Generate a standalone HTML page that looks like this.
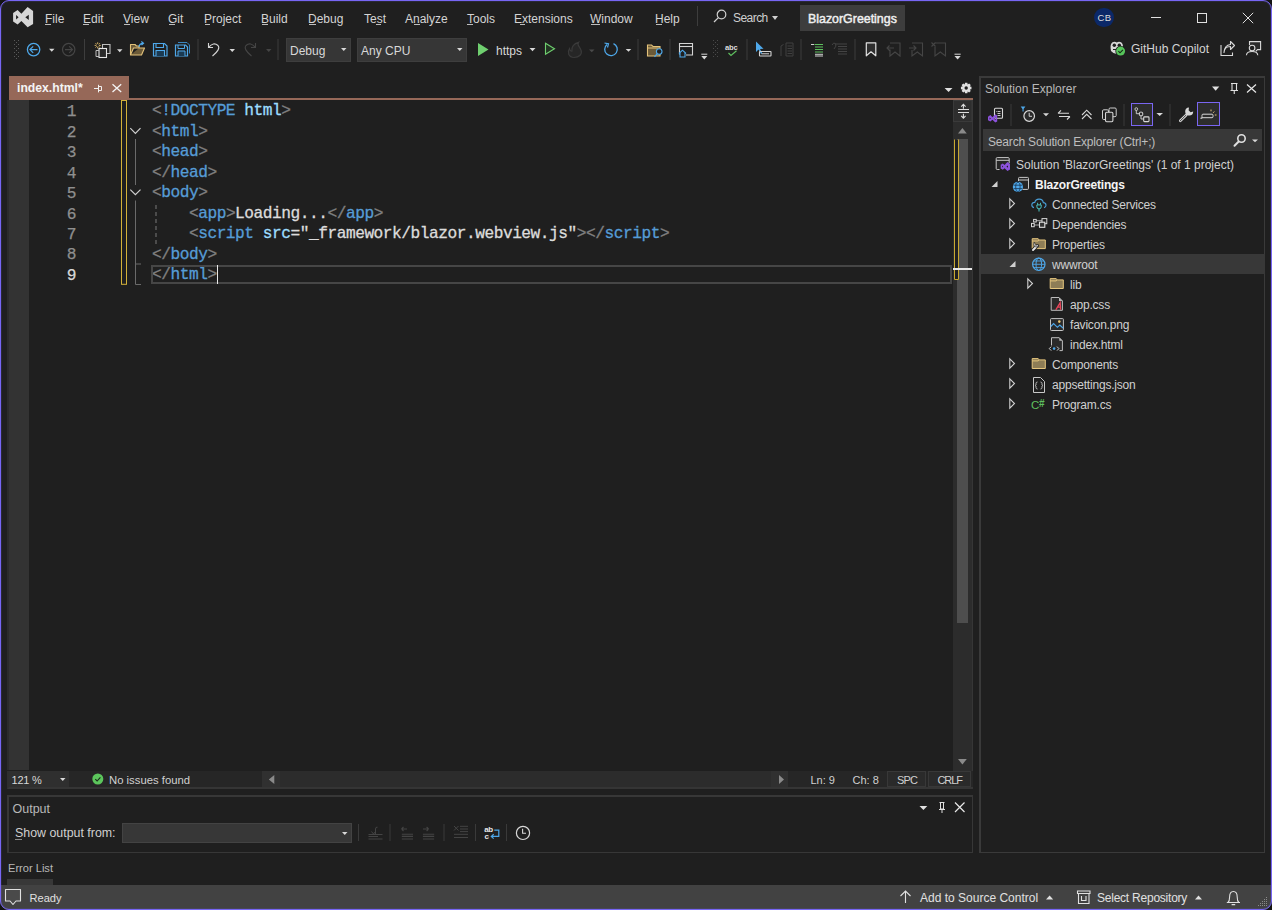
<!DOCTYPE html>
<html><head><meta charset="utf-8">
<style>
*{margin:0;padding:0;box-sizing:border-box}
html,body{width:1272px;height:910px;overflow:hidden;background:#141414}
body{font-family:"Liberation Sans",sans-serif;font-size:12px;color:#d0d0d0;position:relative}
.a{position:absolute}
.t{position:absolute;white-space:pre;line-height:14px}
#win{position:absolute;left:0;top:0;width:1272px;height:910px;background:#1f1f1f;overflow:hidden}
#frame{position:absolute;left:0;top:0;width:1272px;height:910px;border:1px solid #7766f4;border-radius:9px;box-shadow:0 0 0 30px #141414, inset 0 0 0 1px rgba(119,102,244,0.12);z-index:50}
svg.ov{position:absolute;left:0;top:0;z-index:5}
.menu .t{top:12px;color:#d4d4d4}
.ul{position:absolute;height:1px;top:24px;background:#bdbdbd}
.u{text-decoration:underline;text-underline-offset:2px}
.code{font-family:"Liberation Mono",monospace;font-size:16.2px;line-height:20.45px;letter-spacing:-0.48px;-webkit-text-stroke:0.3px}
.ln{position:absolute;left:30px;width:46px;text-align:right;color:#8f8f8f;font-family:"Liberation Mono",monospace;font-size:16.2px;letter-spacing:-0.48px;-webkit-text-stroke:0.25px}
.tag{color:#569cd6}
.br{color:#808080}
.att{color:#9cdcfe}
.txt{color:#dcdcdc}
.sep{position:absolute;width:1px;background:#3d3d3d}
</style></head><body>
<div id="win">
<!-- title/menu bar -->
<div class="menu">
  <svg class="ov" width="40" height="34" viewBox="0 0 40 34"><path d="M13.1 12.9 L17.6 10.1 L21.4 13.7 L27.6 7 L33.1 10.9 V24 L27.6 27.2 L21.4 21.1 L17.6 24.6 L13.1 21.5 Z M16.1 15 V19.5 L18.6 17.2 Z M25.3 17.2 L28.8 14.7 V20 Z" fill="#d6d6d6" fill-rule="evenodd"/></svg>
  <div class="t" style="left:45px">File</div>
  <div class="t" style="left:83px">Edit</div>
  <div class="t" style="left:123px">View</div>
  <div class="t" style="left:168px">Git</div>
  <div class="t" style="left:204px">Project</div>
  <div class="t" style="left:261px">Build</div>
  <div class="t" style="left:308px">Debug</div>
  <div class="t" style="left:364px">Test</div>
  <div class="t" style="left:405px">Analyze</div>
  <div class="t" style="left:467px">Tools</div>
  <div class="t" style="left:514px">Extensions</div>
  <div class="t" style="left:590px">Window</div>
  <div class="t" style="left:655px">Help</div>
<div class="ul" style="left:45px;width:6px"></div><div class="ul" style="left:83px;width:6px"></div><div class="ul" style="left:124px;width:6px"></div><div class="ul" style="left:169px;width:6px"></div><div class="ul" style="left:205px;width:5px"></div><div class="ul" style="left:262px;width:6px"></div><div class="ul" style="left:309px;width:7px"></div><div class="ul" style="left:376px;width:5px"></div><div class="ul" style="left:414px;width:6px"></div><div class="ul" style="left:467px;width:6px"></div><div class="ul" style="left:520px;width:5px"></div><div class="ul" style="left:591px;width:9px"></div><div class="ul" style="left:656px;width:6px"></div>
  <div class="sep" style="left:697px;top:6px;height:20px"></div>
  <svg class="a" style="left:713px;top:9px" width="14" height="14" viewBox="0 0 14 14"><circle cx="8.5" cy="5.5" r="4.3" fill="none" stroke="#d0d0d0" stroke-width="1.2"/><path d="M5.4 8.6 L1 13" stroke="#d0d0d0" stroke-width="1.3"/></svg>
  <div class="t" style="left:733px;top:10.5px;letter-spacing:-0.55px;color:#d0d0d0">Search</div>
  <div class="a" style="left:772px;top:16px;width:0;height:0;border-left:3.5px solid transparent;border-right:3.5px solid transparent;border-top:4px solid #d0d0d0"></div>
  <div class="a" style="left:800px;top:5px;width:105px;height:26px;background:#3d3d3d"></div>
  <div class="t" style="left:808px;top:11.5px;color:#f0f0f0;font-size:12.4px;-webkit-text-stroke:0.45px">BlazorGreetings</div>
  <div class="a" style="left:1094px;top:7.7px;width:19.8px;height:19.8px;border-radius:50%;background:#0b2868"></div>
  <div class="t" style="left:1097.5px;top:10.5px;font-size:9.5px;color:#dcdcdc;letter-spacing:0.3px">CB</div>
  <div class="a" style="left:1151px;top:17px;width:10px;height:1px;background:#e0e0e0"></div>
  <div class="a" style="left:1197px;top:13px;width:10px;height:10px;border:1px solid #e0e0e0"></div>
  <svg class="a" style="left:1242px;top:12px" width="13" height="13" viewBox="0 0 13 13"><path d="M0.8 0.8 L11.2 11.2 M11.2 0.8 L0.8 11.2" stroke="#e0e0e0" stroke-width="1"/></svg>
</div>

<!-- toolbar -->
<svg class="ov" width="1272" height="910" viewBox="0 0 1272 910">
 <g fill="#5a5a5a">
  <rect x="14" y="40" width="1" height="1"/><rect x="18" y="40" width="1" height="1"/>
  <rect x="16" y="42" width="1" height="1"/>
  <rect x="14" y="44" width="1" height="1"/><rect x="18" y="44" width="1" height="1"/>
  <rect x="16" y="46" width="1" height="1"/>
  <rect x="14" y="48" width="1" height="1"/><rect x="18" y="48" width="1" height="1"/>
  <rect x="16" y="50" width="1" height="1"/>
  <rect x="14" y="52" width="1" height="1"/><rect x="18" y="52" width="1" height="1"/>
  <rect x="16" y="54" width="1" height="1"/>
  <rect x="14" y="56" width="1" height="1"/><rect x="18" y="56" width="1" height="1"/>
  <rect x="16" y="58" width="1" height="1"/>
 </g>
 <!-- back -->
 <circle cx="33.6" cy="49.6" r="6.2" fill="none" stroke="#4ea8ea" stroke-width="1.3"/>
 <path d="M30 49.6 H37.5 M33.2 46.3 L29.9 49.6 L33.2 52.9" fill="none" stroke="#4ea8ea" stroke-width="1.2"/>
 <path d="M49 48.8 H54.5 L51.75 51.8 Z" fill="#d8d8d8"/>
 <!-- forward disabled -->
 <circle cx="68.7" cy="49.6" r="6.2" fill="none" stroke="#454545" stroke-width="1.2"/>
 <path d="M65 49.6 H72.5 M69.2 46.3 L72.5 49.6 L69.2 52.9" fill="none" stroke="#454545" stroke-width="1.1"/>
 <rect x="84" y="39" width="1" height="21" fill="#3d3d3d"/>
 <!-- new project -->
 <path d="M102.5 48 V44.5 H110 V53.5 H107" fill="none" stroke="#bdbdbd" stroke-width="1.1"/>
 <rect x="99" y="48.5" width="7.5" height="9" fill="#2a2a2a" stroke="#e6e6e6" stroke-width="1.1"/>
 <path d="M99 50.5 H96 V56.5 H99" fill="none" stroke="#bdbdbd" stroke-width="1"/>
 <path d="M97.7 42.3 V48.5 M94.6 45.4 H100.8 M95.5 43.2 L99.9 47.6 M99.9 43.2 L95.5 47.6" stroke="#e6c06a" stroke-width="0.9"/>
 <circle cx="97.7" cy="45.4" r="1.3" fill="#1f1f1f"/>
 <path d="M117 49.2 H122.5 L119.75 52.2 Z" fill="#d8d8d8"/>
 <!-- open -->
 <path d="M130.5 55 V44.5 H135 L136.5 46 H139 V48 H133.5 L130.5 55 H141.5 L144.5 48 H139" fill="#6b5a38" stroke="#e3c27a" stroke-width="1.1" stroke-linejoin="round"/>
 <path d="M139 47 Q139.5 43.5 143 43.2 M141.3 41.5 L143.5 43.2 L141.5 45" fill="none" stroke="#4ea8ea" stroke-width="1.2"/>
 <!-- save -->
 <path d="M153.5 43.5 H164.5 L167 46 V56 H153.5 Z" fill="none" stroke="#4ea8ea" stroke-width="1.2"/>
 <path d="M156 43.5 V47.5 H163.5 V43.5" fill="none" stroke="#4ea8ea" stroke-width="1.1"/>
 <path d="M156 56 V50.5 H164.5 V56" fill="#1b3a52" stroke="#4ea8ea" stroke-width="1.1"/>
 <!-- save all -->
 <path d="M178 42.5 H187 L189.5 45 V53.5" fill="none" stroke="#3b86bf" stroke-width="1"/>
 <path d="M175.5 45 H185.5 L187.5 47 V56 H175.5 Z" fill="none" stroke="#4ea8ea" stroke-width="1.2"/>
 <path d="M178 45 V48.5 H184.5 V45" fill="none" stroke="#4ea8ea" stroke-width="1"/>
 <path d="M178 56 V51 H185 V56" fill="#1b3a52" stroke="#4ea8ea" stroke-width="1"/>
 <rect x="197.5" y="39" width="1" height="21" fill="#3d3d3d"/>
 <!-- undo -->
 <path d="M208.5 43 L208.5 47.5 L213 47.5 M208.6 47.3 Q213.5 41.5 218 45.5 Q221 49 212.5 56" fill="none" stroke="#d4d4d4" stroke-width="1.1"/>
 <path d="M229.5 49 H235 L232.25 52 Z" fill="#d8d8d8"/>
 <!-- redo disabled -->
 <path d="M255.5 43 L255.5 47.5 L251 47.5 M255.4 47.3 Q250.5 41.5 246 45.5 Q243 49 251.5 56" fill="none" stroke="#454545" stroke-width="1.1"/>
 <path d="M266 49 H271.5 L268.75 52 Z" fill="#454545"/>
 <rect x="277.5" y="39" width="1" height="21" fill="#3d3d3d"/>
 <!-- play -->
 <path d="M478 43 L488.5 49.5 L478 56 Z" fill="#6fcf6f"/>
 <path d="M529.5 48 H535.5 L532.5 51.2 Z" fill="#d8d8d8"/>
 <path d="M545.5 43.3 L554.5 48.8 L545.5 54.3 Z" fill="#223322" stroke="#6fcf6f" stroke-width="1.1"/>
 <!-- flame -->
 <path d="M574 57.5 C568.5 57.5 567 52 569.5 48.5 C570 51 571.5 51.5 572 51 C571 47 574 43.5 578.5 42.3 C576.5 45 580 47 581 50 C582.5 54 579.5 57.5 574 57.5 Z" fill="#262626" stroke="#3a3a3a" stroke-width="1.2"/>
 <path d="M589 49.5 H594.5 L591.75 52.2 Z" fill="#4a4a4a"/>
 <!-- refresh -->
 <path d="M607 44.5 A6.3 6.3 0 1 0 613.5 43.6" fill="none" stroke="#4ea8ea" stroke-width="1.3"/>
 <path d="M604.5 43 L608.5 43.8 L607.5 47.5" fill="none" stroke="#4ea8ea" stroke-width="1.2"/>
 <path d="M625.7 49 H631.3 L628.5 51.8 Z" fill="#d8d8d8"/>
 <rect x="637.5" y="39" width="1" height="21" fill="#3d3d3d"/>
 <!-- folder search -->
 <path d="M647.5 45 H651.5 L653 46.5 H660 V56 H647.5 Z" fill="#6b5a38" stroke="#e3c27a" stroke-width="1.1"/>
 <path d="M647.5 48 H660" stroke="#e3c27a" stroke-width="1"/>
 <circle cx="659.2" cy="51.5" r="2.8" fill="#1f1f1f" stroke="#4ea8ea" stroke-width="1.1"/>
 <path d="M657.2 53.6 L654.5 56.8" stroke="#4ea8ea" stroke-width="1.3"/>
 <rect x="669.5" y="39" width="1" height="21" fill="#3d3d3d"/>
 <!-- window home -->
 <path d="M679.5 54.5 V43.5 H692.5 V55 H686" fill="none" stroke="#d4d4d4" stroke-width="1.1"/>
 <path d="M679.5 46.5 H692.5" stroke="#d4d4d4" stroke-width="1.1"/>
 <path d="M679 53.5 L682.5 50.2 L686 53.5 M680 53 V57 H685 V53" fill="#1f1f1f" stroke="#4ea8ea" stroke-width="1.1"/>
 <path d="M701.3 54.2 H707.3" stroke="#d8d8d8" stroke-width="1"/><path d="M701.3 56 H707.3 L704.3 59.6 Z" fill="#d8d8d8"/>
 <g fill="#4a4a4a">
  <rect x="713" y="40" width="1" height="1"/><rect x="717" y="40" width="1" height="1"/><rect x="715" y="42" width="1" height="1"/>
  <rect x="713" y="44" width="1" height="1"/><rect x="717" y="44" width="1" height="1"/><rect x="715" y="46" width="1" height="1"/>
  <rect x="713" y="48" width="1" height="1"/><rect x="717" y="48" width="1" height="1"/><rect x="715" y="50" width="1" height="1"/>
  <rect x="713" y="52" width="1" height="1"/><rect x="717" y="52" width="1" height="1"/><rect x="715" y="54" width="1" height="1"/>
  <rect x="713" y="56" width="1" height="1"/><rect x="717" y="56" width="1" height="1"/>
 </g>
 <text x="725" y="50" font-family="Liberation Sans" font-size="7.6" font-weight="bold" fill="#dcdcdc" letter-spacing="-0.2">abc</text>
 <path d="M728.5 53 L731 55.5 L736.5 50.8" fill="none" stroke="#5fc05f" stroke-width="1.2"/>
 <rect x="746.5" y="39" width="1" height="21" fill="#3d3d3d"/>
 <!-- select cursor -->
 <path d="M756 41.5 L756 52 L758.5 49.5 L761 54 L762.3 53.3 L760 49 L763.5 48.8 Z" fill="#4ea8ea"/>
 <rect x="759.5" y="51.5" width="11.5" height="4.5" rx="0.5" fill="none" stroke="#d4d4d4" stroke-width="1.1"/>
 <path d="M761.5 53.8 H769" stroke="#d4d4d4" stroke-width="1"/>
 <!-- disabled -->
 <path d="M781 56 V46 L783.5 44.5 M786 43 H793 V56 H786 Z M787.5 46 H792 M787.5 48.5 H792 M787.5 51 H792 M787.5 53.5 H792" fill="none" stroke="#404040" stroke-width="1"/>
 <rect x="800.5" y="39" width="1" height="21" fill="#3d3d3d"/>
 <!-- comment -->
 <path d="M811 44.5 H814 M814.5 44.5 H823 M815 47 H823 M815 49.5 H823 M815 52 H823" stroke="#5fbf5f" stroke-width="1.2"/>
 <path d="M811 44.5 H814" stroke="#d0d0d0" stroke-width="1"/>
 <path d="M815 54.3 H823 M815 56 H823" stroke="#d0d0d0" stroke-width="1"/>
 <!-- uncomment -->
 <path d="M836 44 H847 M838 46.5 H847 M838 49 H847 M838 51.5 H847 M838 54 H847 M832 45 Q833.5 42 835.5 43.5 Q837 46 834 49" fill="none" stroke="#444" stroke-width="1"/>
 <rect x="854.5" y="39" width="1" height="21" fill="#3d3d3d"/>
 <!-- bookmarks -->
 <path d="M866.3 42.8 H875.8 V55.8 L871 51.8 L866.3 55.8 Z" fill="#2e2e2e" stroke="#e0e0e0" stroke-width="1.2" stroke-linejoin="round"/>
 <path d="M890 43 H900 V56 L895 52 L890 56 V49.5 M887 48 H894 M889.5 45.5 L887 48 L889.5 50.5" fill="none" stroke="#454545" stroke-width="1.1"/>
 <path d="M912 43 H922.5 V56 L917.3 52 L912 56 V50 M909 48 H916 M913.5 45.5 L916 48 L913.5 50.5" fill="none" stroke="#454545" stroke-width="1.1"/>
 <path d="M935 43 H945.5 V56 L940.3 52 L935 56 V47 M931.5 42.5 L935.5 46.5 M935.5 42.5 L931.5 46.5" fill="none" stroke="#454545" stroke-width="1.1"/>
 <path d="M954.5 54.2 H960.7" stroke="#d8d8d8" stroke-width="1"/><path d="M954.5 56 H960.7 L957.6 59.6 Z" fill="#d8d8d8"/>
 <!-- copilot -->
 <path d="M1110.6 48 Q1110.3 43.8 1112.5 42.3 Q1114.8 41 1116.8 42.6 Q1118.8 41 1121.1 42.3 Q1123.3 43.8 1123 48 L1122.6 51 Q1120 54 1116.8 54 Q1113.6 54 1111 51 Z" fill="#d8d8d8"/>
 <circle cx="1114.3" cy="45.2" r="1.7" fill="#1f1f1f"/>
 <circle cx="1119.3" cy="45.2" r="1.7" fill="#1f1f1f"/>
 <path d="M1113 49.5 H1120.6" stroke="#1f1f1f" stroke-width="1"/>
 <circle cx="1120.6" cy="51.1" r="5.3" fill="#1f1f1f"/>
 <circle cx="1120.6" cy="51.1" r="4.5" fill="#56c45a"/>
 <path d="M1118.4 51.2 L1120 52.8 L1122.9 49.8" fill="none" stroke="#142814" stroke-width="1.1"/>
 <!-- share -->
 <path d="M1221 45 V55.5 H1232.5 V52.5" fill="none" stroke="#d8d8d8" stroke-width="1.1"/>
 <path d="M1224 52.5 Q1224.5 46.5 1230.5 46.5 V49.5 L1234.5 45.5 L1230.5 41.5 V44.5 Q1224.5 45 1224 52.5 Z" fill="none" stroke="#d8d8d8" stroke-width="1.1" stroke-linejoin="round"/>
 <!-- feedback -->
 <path d="M1249.5 45 V41.6 H1260.6 V49.6 H1257.5 L1255.8 51.3" fill="#2a2a2a" stroke="#d8d8d8" stroke-width="1.1"/>
 <circle cx="1252.1" cy="48" r="2.8" fill="#1f1f1f" stroke="#d8d8d8" stroke-width="1.1"/>
 <path d="M1246.4 55.2 Q1246.8 51.5 1252.1 51.5 Q1257.4 51.5 1257.8 55.2" fill="none" stroke="#d8d8d8" stroke-width="1.1"/>
</svg>
<div class="a" style="left:286px;top:38px;width:65px;height:24px;background:#363636;border:1px solid #3e3e3e"></div>
<div class="t" style="left:290px;top:44px;color:#d8d8d8">Debug</div>
<svg class="a" style="left:341px;top:48px;z-index:6" width="6" height="4"><path d="M0 0 H5.5 L2.75 3 Z" fill="#d8d8d8"/></svg>
<div class="a" style="left:357px;top:38px;width:110px;height:24px;background:#363636;border:1px solid #3e3e3e"></div>
<div class="t" style="left:361px;top:44px;color:#d8d8d8">Any CPU</div>
<svg class="a" style="left:457px;top:48px;z-index:6" width="6" height="4"><path d="M0 0 H5.5 L2.75 3 Z" fill="#d8d8d8"/></svg>
<div class="t" style="left:496px;top:43.5px;color:#d8d8d8">https</div>
<div class="t" style="left:1131px;top:42px;color:#d4d4d4">GitHub Copilot</div>


<!-- tab -->
<div class="a" style="left:9px;top:76px;width:120px;height:24px;background:#966858"></div>
<div class="t" style="left:17px;top:81px;font-weight:bold;color:#f4f4f4;font-size:12.2px">index.html*</div>
<div class="a" style="left:9px;top:98px;width:964px;height:2px;background:#966858"></div>

<!-- solution explorer -->
<div class="a" style="left:979px;top:76px;width:286px;height:777px;border:1px solid #3a3a3a;border-width:2px 1px 1px 2px;background:#1f1f1f"></div>
<div class="t" style="left:985px;top:82px;color:#b8b8b8">Solution Explorer</div>
<div class="a" style="left:983px;top:129px;width:279px;height:22px;background:#383838"></div>
<div class="t" style="left:988px;top:134.5px;color:#bebebe;letter-spacing:-0.18px">Search Solution Explorer (Ctrl+;)</div>
<div class="a" style="left:981px;top:254px;width:284px;height:20px;background:#383838"></div>
<div class="a" style="left:1131px;top:103px;width:22px;height:23px;background:#2d2d2d;border:1px solid #7a66f2"></div>
<div class="a" style="left:1197px;top:102px;width:23px;height:24px;background:#2d2d2d;border:1px solid #7a66f2"></div>
<div class="t" style="left:1016px;top:158px;color:#d0d0d0">Solution 'BlazorGreetings' (1 of 1 project)</div>
<div class="t" style="left:1035px;top:178px;color:#f4f4f4;font-weight:bold;letter-spacing:-0.2px">BlazorGreetings</div>
<div class="t" style="left:1052px;top:198px;color:#d0d0d0;letter-spacing:-0.2px">Connected Services</div>
<div class="t" style="left:1052px;top:218px;color:#d0d0d0;letter-spacing:-0.2px">Dependencies</div>
<div class="t" style="left:1052px;top:238px;color:#d0d0d0;letter-spacing:-0.2px">Properties</div>
<div class="t" style="left:1052px;top:258px;color:#d0d0d0;letter-spacing:-0.2px">wwwroot</div>
<div class="t" style="left:1070px;top:278px;color:#d0d0d0;letter-spacing:-0.2px">lib</div>
<div class="t" style="left:1070px;top:298px;color:#d0d0d0;letter-spacing:-0.2px">app.css</div>
<div class="t" style="left:1070px;top:318px;color:#d0d0d0;letter-spacing:-0.2px">favicon.png</div>
<div class="t" style="left:1070px;top:338px;color:#d0d0d0;letter-spacing:-0.2px">index.html</div>
<div class="t" style="left:1052px;top:358px;color:#d0d0d0;letter-spacing:-0.2px">Components</div>
<div class="t" style="left:1052px;top:378px;color:#d0d0d0;letter-spacing:-0.2px">appsettings.json</div>
<div class="t" style="left:1052px;top:398px;color:#d0d0d0;letter-spacing:-0.2px">Program.cs</div>
<svg class="ov" width="1272" height="910" viewBox="0 0 1272 910">
 <!-- header controls -->
 <path d="M1212 86.5 H1219.3 L1215.65 90.7 Z" fill="#e0e0e0"/>
 <path d="M1231 83.5 H1237.5 M1232 83.5 V90.5 H1236.5 V83.5 M1230.5 90.5 H1238 M1234.25 90.5 V94" fill="none" stroke="#e0e0e0" stroke-width="1.1"/>
 <path d="M1247 84.5 L1256 92.5 M1256 84.5 L1247 92.5" stroke="#e8e8e8" stroke-width="1.2"/>
 <!-- toolbar icons -->
 <rect x="994.5" y="108.3" width="8" height="10" rx="1" fill="none" stroke="#d8d8d8" stroke-width="1.1"/>
 <path d="M997.5 111.5 H1000.5 M997.5 113.5 H1000.5 M997.5 115.5 H1000.5" stroke="#d8d8d8" stroke-width="0.9"/>
 <path d="M996.2 111.5 H996.8" stroke="#d8d8d8" stroke-width="0.9"/>
 <path d="M988 116.8 L990.4 115 L992.4 117.2 L995.3 114.2 L997.2 115.4 V121.6 L995.3 122.6 L992.4 119.8 L990.4 121.6 L988 120.2 Z M989.6 117.4 V119.4 L990.9 118.4 Z M993.8 118.5 L995.6 117.2 V119.9 Z" fill="#8c52dc" fill-rule="evenodd"/>
 <rect x="1010.5" y="104" width="1" height="22" fill="#3a3a3a"/>
 <path d="M1020.7 106.6 H1025.4 L1023.6 109 V111.6 H1022.5 V109 Z" fill="#4ea8ea"/>
 <circle cx="1029.2" cy="116" r="5.3" fill="#2a2a2a" stroke="#d8d8d8" stroke-width="1.2"/>
 <path d="M1029.2 112.8 V116.3 H1032" fill="none" stroke="#d0d0d0" stroke-width="1"/>
 <path d="M1043 113.3 H1049 L1046 116.3 Z" fill="#d8d8d8"/>
 <path d="M1058 113.3 H1069 M1058 113.3 L1061 110.3 M1059 116.5 H1070 M1070 116.5 L1067 119.5" fill="none" stroke="#d8d8d8" stroke-width="1.1"/>
 <path d="M1082 115 L1086.7 110.2 L1091.5 115 M1082 119 L1086.7 114.3 L1091.5 119" fill="none" stroke="#d8d8d8" stroke-width="1.1"/>
 <rect x="1109" y="108" width="7.2" height="8.7" rx="1.2" fill="#1f1f1f" stroke="#cfcfcf" stroke-width="1"/><rect x="1102.5" y="109.8" width="6" height="9.7" rx="1.2" fill="#1f1f1f" stroke="#cfcfcf" stroke-width="1"/><rect x="1105.5" y="112.2" width="7.4" height="9.5" rx="1.2" fill="#2a2a2a" stroke="#d8d8d8" stroke-width="1.1"/>
 <rect x="1123.5" y="104" width="1" height="22" fill="#3a3a3a"/>
 <rect x="1135" y="107.8" width="2.6" height="2.6" rx="1" fill="none" stroke="#d8d8d8" stroke-width="0.9"/>
 <path d="M1136.3 110.4 V113.7 H1139.4 M1141 115.7 V119 H1143.7" fill="none" stroke="#d8d8d8" stroke-width="0.9"/>
 <rect x="1139.4" y="112.2" width="3.3" height="3.5" rx="0.8" fill="none" stroke="#d8d8d8" stroke-width="1"/>
 <rect x="1143.7" y="116.9" width="5.3" height="4.7" rx="0.8" fill="none" stroke="#d8d8d8" stroke-width="1.1"/>
 <path d="M1156.4 113 H1163 L1159.7 116 Z" fill="#d8d8d8"/>
 <rect x="1169.5" y="104" width="1" height="22" fill="#3a3a3a"/>
 <path d="M1180.3 120.8 L1186 115.2" stroke="#d8d8d8" stroke-width="2.6" stroke-linecap="round"/><path d="M1180.3 120.8 L1186 115.2" stroke="#1f1f1f" stroke-width="0.8" stroke-linecap="round"/>
 <path d="M1189 107.6 A4 4 0 1 0 1193.2 111.6 L1190.6 112.2 L1188.6 110.2 Z" fill="#d8d8d8"/>
 <rect x="1202" y="114.2" width="11" height="3.5" rx="1" fill="none" stroke="#d8d8d8" stroke-width="1"/><path d="M1202.3 117.6 L1200.6 118.2 H1202.5" fill="none" stroke="#d8d8d8" stroke-width="0.9"/>
 <path d="M1211 109.5 V111.3 M1214.3 111.5 L1213.2 112.8 M1216.5 115 H1214.8" stroke="#e3c27a" stroke-width="1"/>
 <!-- search -->
 <circle cx="1241.5" cy="138.5" r="3.7" fill="none" stroke="#e0e0e0" stroke-width="1.6"/>
 <path d="M1238.7 141.5 L1234.5 145.7" stroke="#e0e0e0" stroke-width="2" stroke-linecap="round"/>
 <path d="M1252 139.5 H1258 L1255 142.2 Z" fill="#d8d8d8"/>
 <!-- tree arrows -->
 <path d="M991.5 187 L997.5 181 V187 Z" fill="#d0d0d0"/>
 <g fill="none" stroke="#d0d0d0" stroke-width="1.1">
  <path d="M1009.8 198.8 L1014.5 203.5 L1009.8 208.2 Z"/>
  <path d="M1009.8 218.8 L1014.5 223.5 L1009.8 228.2 Z"/>
  <path d="M1009.8 238.8 L1014.5 243.5 L1009.8 248.2 Z"/>
  <path d="M1027.8 278.8 L1032.5 283.5 L1027.8 288.2 Z"/>
  <path d="M1009.8 358.8 L1014.5 363.5 L1009.8 368.2 Z"/>
  <path d="M1009.8 378.8 L1014.5 383.5 L1009.8 388.2 Z"/>
  <path d="M1009.8 398.8 L1014.5 403.5 L1009.8 408.2 Z"/>
 </g>
 <path d="M1009.5 267 L1015.5 261 V267 Z" fill="#d0d0d0"/>
 <!-- solution icon -->
 <path d="M999.5 169.5 H997.2 Q996.2 169.5 996.2 168.5 V158.6 Q996.2 157.6 997.2 157.6 H1008.2 Q1009.2 157.6 1009.2 158.6 V163" fill="#262626" stroke="#c8c8c8" stroke-width="1"/>
 <path d="M996.2 160.3 H1009.2" stroke="#c8c8c8" stroke-width="1"/>
 <g transform="translate(1000.7,162.1) scale(0.465,0.436) translate(-13.1,-7)"><path d="M13.1 12.9 L17.6 10.1 L21.4 13.7 L27.6 7 L33.1 10.9 V24 L27.6 27.2 L21.4 21.1 L17.6 24.6 L13.1 21.5 Z M16.1 15 V19.5 L18.6 17.2 Z M25.3 17.2 L28.8 14.7 V20 Z" fill="#8c52dc" fill-rule="evenodd"/></g>
 <!-- project icon -->
 <path d="M1018.5 181 V178.4 Q1018.5 177.4 1019.5 177.4 H1027.5 Q1028.5 177.4 1028.5 178.4 V188.4 Q1028.5 189.4 1027.5 189.4 H1022.5" fill="#262626" stroke="#c8c8c8" stroke-width="1"/>
 <path d="M1018.5 180 H1028.5" stroke="#c8c8c8" stroke-width="1"/>
 <circle cx="1017.9" cy="186.9" r="5.1" fill="#4ea8ea"/>
 <path d="M1013.6 185.2 H1022.2 M1013.6 188.6 H1022.2" stroke="#1a3550" stroke-width="0.8"/>
 <ellipse cx="1017.9" cy="186.9" rx="2.2" ry="4.6" fill="none" stroke="#1a3550" stroke-width="0.8"/>
 <!-- connected services -->
 <path d="M1034 207.6 Q1031.7 207.2 1031.8 204.8 Q1032 202.3 1034.8 202.4 Q1035.6 199 1039.2 199.1 Q1042.8 199.3 1043.3 202.6 Q1046 202.8 1046 205.2 Q1046 207.3 1044 207.6" fill="none" stroke="#4a9fd8" stroke-width="1.1"/>
 <path d="M1037.6 202.8 V204.7 M1040.5 202.8 V204.7" stroke="#4ec9c9" stroke-width="0.9"/>
 <path d="M1036.9 204.9 H1041.2 V206.8 Q1041.2 208.9 1039 208.9 Q1036.9 208.9 1036.9 206.8 Z" fill="#1f1f1f" stroke="#4ec9c9" stroke-width="1"/>
 <path d="M1039 209 V211.5" stroke="#4ec9c9" stroke-width="1"/>
 <!-- dependencies -->
 <path d="M1034.2 225 H1039.2 M1036.2 220.7 H1041.8" stroke="#bdbdbd" stroke-width="0.9"/>
 <rect x="1031.5" y="223.4" width="2.7" height="3.3" fill="none" stroke="#d8d8d8" stroke-width="1"/>
 <rect x="1033.6" y="219.4" width="2.6" height="2.6" fill="none" stroke="#d8d8d8" stroke-width="1"/>
 <rect x="1042" y="218.6" width="4.8" height="5.1" fill="#1f1f1f" stroke="#d8d8d8" stroke-width="1"/>
 <rect x="1039.5" y="222.2" width="5.3" height="5.1" fill="#333" stroke="#e0e0e0" stroke-width="1.1"/>
 <!-- properties -->
 <path d="M1032.2 248.6 V238.7 H1038.2 L1039.2 240.0 H1045.3 V248.6 Z" fill="#8e7d56" stroke="#e6c67e" stroke-width="1"/><path d="M1032.2 241.0 H1038.2 L1039.2 240.0" fill="none" stroke="#e6c67e" stroke-width="1"/>
 <path d="M1033 250 L1037.3 245.8" stroke="#1f1f1f" stroke-width="3.6" stroke-linecap="round"/>
 <path d="M1033 250 L1037.3 245.8" stroke="#e8e8e8" stroke-width="1.9" stroke-linecap="round"/>
 <path d="M1034.5 242.2 A2.9 2.9 0 1 0 1038.9 246.2 L1036.6 246.3 L1035.2 244.6 Z" fill="#e8e8e8" stroke="#1f1f1f" stroke-width="0.6"/>
 <!-- wwwroot globe -->
 <circle cx="1038.8" cy="264.3" r="6.2" fill="none" stroke="#4ea8ea" stroke-width="1.2"/>
 <ellipse cx="1038.8" cy="264.3" rx="2.8" ry="6.2" fill="none" stroke="#4ea8ea" stroke-width="1"/>
 <path d="M1032.6 264.3 H1045 M1033.5 261 H1044 M1033.5 267.6 H1044" stroke="#4ea8ea" stroke-width="0.9"/>
 <!-- folders -->
 <path d="M1050.2 288.5 V278.6 H1056.2 L1057.2 279.9 H1063.3 V288.5 Z" fill="#8e7d56" stroke="#e6c67e" stroke-width="1"/><path d="M1050.2 280.9 H1056.2 L1057.2 279.9" fill="none" stroke="#e6c67e" stroke-width="1"/>
 <path d="M1032.2 368.5 V358.6 H1038.2 L1039.2 359.9 H1045.3 V368.5 Z" fill="#8e7d56" stroke="#e6c67e" stroke-width="1"/><path d="M1032.2 360.9 H1038.2 L1039.2 359.9" fill="none" stroke="#e6c67e" stroke-width="1"/>
 <!-- app.css -->
 <path d="M1051.2 297.5 H1059 L1062.4 300.9 V310.3 H1051.2 Z" fill="#2a2a2a" stroke="#bdbdbd" stroke-width="1"/>
 <path d="M1059 297.5 L1062.4 300.9 H1059 Z" fill="#bdbdbd"/>
 <path d="M1055.8 309.8 L1060.2 302.6 L1060.6 309.8 M1057.6 307.2 H1060.4" fill="none" stroke="#e8455a" stroke-width="1.3"/>
 <!-- favicon -->
 <rect x="1050.5" y="318.6" width="12.9" height="11.9" rx="0.8" fill="#2a2a2a" stroke="#c4c4c4" stroke-width="1"/>
 <path d="M1050.8 326.5 L1053.6 323.5 L1057.4 327.3 L1059.8 325 L1063 328" fill="none" stroke="#4ea8ea" stroke-width="1.1"/>
 <circle cx="1059.3" cy="321.6" r="1.3" fill="#f0c870"/>
 <!-- index.html -->
 <path d="M1051.5 345.5 V337.7 H1059.3 L1062.4 340.8 V350.6 H1059.5" fill="#2a2a2a" stroke="#bdbdbd" stroke-width="1"/>
 <path d="M1059.3 337.7 L1062.4 340.8 H1059.3 Z" fill="#bdbdbd"/>
 <path d="M1051.2 346.6 L1049.3 348.6 L1051.2 350.6 M1057 346.6 L1058.9 348.6 L1057 350.6" fill="none" stroke="#d0d0d0" stroke-width="1"/>
 <circle cx="1054.1" cy="348.6" r="1.3" fill="#4ea8ea"/>
 <!-- appsettings -->
 <path d="M1033.5 377.5 H1040.5 L1044.5 381.5 V392.5 H1033.5 Z" fill="none" stroke="#c8c8c8" stroke-width="1"/>
 <path d="M1037.5 382 Q1036 382 1036 383.5 V385 L1035.3 385.5 L1036 386 V387.5 Q1036 389 1037.5 389 M1040.5 382 Q1042 382 1042 383.5 V385 L1042.7 385.5 L1042 386 V387.5 Q1042 389 1040.5 389" fill="none" stroke="#c8c8c8" stroke-width="0.9"/>
</svg>
<div class="t" style="left:1031px;top:398px;color:#5fc05f;font-size:11.5px">C</div>
<div class="t" style="left:1039px;top:397px;color:#5fc05f;font-size:10px;font-weight:bold">#</div>

<!-- editor extras -->
<svg class="ov" width="1272" height="910" viewBox="0 0 1272 910">
 <!-- tab pin and close -->
 <path d="M94 88.5 H98 M98.5 84.8 V92.4 M98.5 86.5 H101.5 V90.5 H98.5" fill="none" stroke="#f0f0f0" stroke-width="1"/>
 <path d="M112.5 84.3 L121.2 92 M121.2 84.3 L112.5 92" stroke="#f4f4f4" stroke-width="1.3"/>
 <!-- top-right dropdown and gear -->
 <path d="M944.6 88 H952.5 L948.55 92 Z" fill="#e0e0e0"/>
 <g transform="translate(966.2,88)"><path d="M5.27 -1.18 L5.27 1.18 L3.61 1.48 L3.60 1.50 L4.56 2.89 L2.89 4.56 L1.50 3.60 L1.48 3.61 L1.18 5.27 L-1.18 5.27 L-1.48 3.61 L-1.50 3.60 L-2.89 4.56 L-4.56 2.89 L-3.60 1.50 L-3.61 1.48 L-5.27 1.18 L-5.27 -1.18 L-3.61 -1.48 L-3.60 -1.50 L-4.56 -2.89 L-2.89 -4.56 L-1.50 -3.60 L-1.48 -3.61 L-1.18 -5.27 L1.18 -5.27 L1.48 -3.61 L1.50 -3.60 L2.89 -4.56 L4.56 -2.89 L3.60 -1.50 L3.61 -1.48 Z" fill="#e0e0e0"/><circle r="1.7" fill="#1f1f1f"/></g>
 <!-- yellow change margin -->
 <rect x="121.5" y="100.5" width="5" height="183.8" fill="none" stroke="#d4b23a" stroke-width="1"/>
 <!-- outlining -->
 <path d="M130.3 128.2 L135.4 133.3 L140.5 128.2" fill="none" stroke="#d0d0d0" stroke-width="1.2"/>
 <path d="M130.3 189.6 L135.4 194.7 L140.5 189.6" fill="none" stroke="#d0d0d0" stroke-width="1.2"/>
 <path d="M135.5 139 V185" stroke="#6a6a6a" stroke-width="1"/>
 <path d="M135.5 200.5 V284.5 H141 M135.5 264 H141" fill="none" stroke="#6a6a6a" stroke-width="1"/>
 <path d="M156 205 V244" stroke="#6a6a6a" stroke-width="1.2" stroke-dasharray="4 3"/>
 <!-- current line box -->
 <rect x="152" y="266" width="799" height="17" fill="none" stroke="#464646" stroke-width="2"/>
 <rect x="217" y="265" width="1" height="19" fill="#e8e8e8"/>
 <!-- scrollbar -->
 <rect x="953" y="100" width="19" height="671" fill="#2c2c2c"/><rect x="972" y="100" width="1" height="671" fill="#363636"/>
 <rect x="953.5" y="100.5" width="18.5" height="21" fill="#2e2e2e" stroke="#3a3a3a" stroke-width="1"/>
 <path d="M963.4 104.5 V108.8 M961.2 106.6 L963.4 104.4 L965.6 106.6 M963.4 113.8 V118 M961.2 115.9 L963.4 118.1 L965.6 115.9 M958 109.5 H969 M958 112.5 H969" fill="none" stroke="#dcdcdc" stroke-width="1.1"/>
 <path d="M958 133.5 L962.4 128 L966.8 133.5 Z" fill="#8a8a8a"/>
 <rect x="957" y="139" width="11" height="484" fill="#4e4e4e"/>
 <rect x="954" y="140" width="5" height="140" fill="#1f1f1f"/><path d="M954.5 139.5 V279.5 H958.5 V139.5" fill="none" stroke="#c8a832" stroke-width="1"/>
 <rect x="953" y="268" width="19" height="2" fill="#e8e8e8"/>
 <path d="M958 759 L962.4 764.5 L966.8 759 Z" fill="#8a8a8a"/>
</svg>
<!-- editor status bar -->
<div class="a" style="left:7px;top:771px;width:966px;height:18px;background:#262626;border-bottom:2px solid #353535;border-left:2px solid #2e2e2e"></div>
<div class="a" style="left:9px;top:771px;width:60px;height:16px;background:#2f2f2f"></div>
<div class="t" style="left:11.5px;top:772.5px;color:#d8d8d8;font-size:11px;letter-spacing:-0.2px">121 %</div>
<svg class="a" style="left:60px;top:778px;z-index:6" width="6" height="4"><path d="M0 0 H5.5 L2.75 3 Z" fill="#d8d8d8"/></svg>
<svg class="a" style="left:92px;top:773px;z-index:6" width="12" height="12"><circle cx="5.8" cy="6" r="5.5" fill="#5cc65c"/><path d="M3.3 6.2 L5.1 8 L8.4 4.4" fill="none" stroke="#1a2a1a" stroke-width="1.1"/></svg>
<div class="t" style="left:109px;top:773px;color:#d0d0d0;font-size:11.3px">No issues found</div>
<div class="a" style="left:262px;top:771px;width:526px;height:16px;background:#2c2c2c"></div><div class="a" style="left:262px;top:771px;width:18px;height:16px;background:#303030"></div><div class="a" style="left:771px;top:771px;width:17px;height:16px;background:#303030"></div>
<svg class="a" style="left:262px;top:774px;z-index:6" width="526" height="12"><path d="M12.3 1 V10 L6.8 5.5 Z M517 1 V10 L522 5.5 Z" fill="#8a8a8a"/></svg>
<div class="t" style="left:810.5px;top:772.8px;color:#d0d0d0;font-size:11px">Ln: 9</div>
<div class="t" style="left:852.5px;top:772.8px;color:#d0d0d0;font-size:11px">Ch: 8</div>
<div class="a" style="left:887px;top:771px;width:39px;height:16px;background:#2a2a2a;border:1px solid #383838"></div>
<div class="t" style="left:897px;top:772.8px;color:#d0d0d0;font-size:11px;letter-spacing:-0.8px">SPC</div>
<div class="a" style="left:928px;top:771px;width:43px;height:16px;background:#2a2a2a;border:1px solid #383838"></div>
<div class="t" style="left:937.5px;top:772.8px;color:#d0d0d0;font-size:11px;letter-spacing:-1.1px">CRLF</div>

<!-- output panel -->
<div class="a" style="left:7px;top:795px;width:966px;height:58px;border:solid #373737;border-width:2px 1px 1px 2px"></div>
<div class="t" style="left:12.5px;top:801.5px;color:#b8b8b8;font-size:12.5px">Output</div>
<div class="t" style="left:15px;top:826px;color:#d0d0d0;font-size:12.4px">Show output from:</div><div class="a" style="left:15px;top:839px;width:7px;height:1px;background:#8a8a8a"></div>
<div class="a" style="left:122px;top:823px;width:230px;height:20px;background:#373737;border:1px solid #434343"></div>
<svg class="ov" width="1272" height="910" viewBox="0 0 1272 910">
 <path d="M342 832 H347.5 L344.75 835 Z" fill="#d8d8d8"/>
 <rect x="358" y="824" width="1" height="17" fill="#3a3a3a"/>
 <rect x="389.5" y="824" width="1" height="17" fill="#3a3a3a"/>
 <rect x="443.5" y="824" width="1" height="17" fill="#3a3a3a"/>
 <rect x="475" y="824" width="1" height="17" fill="#3a3a3a"/>
 <rect x="506" y="824" width="1" height="17" fill="#3a3a3a"/>
 <path d="M368.5 834.5 H382.5 M368.5 836.5 H378 M368.5 839 H382.5" stroke="#444" stroke-width="1.1"/>
 <path d="M375.5 834 V829 Q375.5 826.8 377.5 827.2 M371.5 831.5 L373.5 834 L375.5 831.5" fill="none" stroke="#444" stroke-width="1"/>
 <path d="M401.5 829 H407 M401.5 829 L403.5 827 M401.5 829 L403.5 831 M401.8 834.3 H413 M401.8 836.4 H413 M401.8 839 H413" fill="none" stroke="#444" stroke-width="1.1"/>
 <path d="M428.6 829 H423 M428.6 829 L426.6 827 M428.6 829 L426.6 831 M422.9 834.3 H434.2 M422.9 836.4 H434.2 M422.9 839 H434.2" fill="none" stroke="#444" stroke-width="1.1"/>
 <path d="M454 826 L458.5 830.5 M458.5 826 L454 830.5 M460 826.3 H468 M460 829 H468 M460 831.6 H468 M454 834.3 H468 M454 837.5 H468" fill="none" stroke="#444" stroke-width="1"/>
 <text x="484.2" y="832" font-family="Liberation Sans" font-size="8" font-weight="bold" fill="#e8e8e8" letter-spacing="-0.3">ab</text>
 <text x="484.4" y="838.5" font-family="Liberation Sans" font-size="8" font-weight="bold" fill="#e8e8e8">c</text>
 <path d="M494.3 830.2 H498.8 V836.4 H491.5 M493.7 834.2 L491.3 836.4 L493.7 838.6" fill="none" stroke="#4ea8ea" stroke-width="1.2"/>
 <circle cx="523" cy="832.9" r="6.6" fill="none" stroke="#d8d8d8" stroke-width="1.2"/>
 <path d="M522.6 828.8 V833.3 H526" fill="none" stroke="#d8d8d8" stroke-width="1.1"/>
 <!-- output header controls -->
 <path d="M919.5 806 H927.3 L923.4 810 Z" fill="#e0e0e0"/>
 <path d="M939.5 802.5 H944.5 M940.5 802.5 V809 H943.5 V802.5 M939 809.5 H945 M942 809.5 V813" fill="none" stroke="#e0e0e0" stroke-width="1"/>
 <path d="M955 802.5 L964.5 812 M964.5 802.5 L955 812" stroke="#e8e8e8" stroke-width="1.2"/>
</svg>
<div class="t" style="left:8px;top:861px;color:#b8b8b8;font-size:11.1px">Error List</div>
<div class="a" style="left:7px;top:879px;width:46px;height:6px;background:#383838"></div>

<!-- status bar -->
<div class="a" style="left:0;top:885px;width:1272px;height:25px;background:#424242"></div>
<svg class="ov" width="1272" height="910" viewBox="0 0 1272 910">
 <path d="M5.5 889.5 H20.5 V901 H16 L13 904.5 L10 901 H5.5 Z" fill="#4a4a4a" stroke="#e0e0e0" stroke-width="1.1" stroke-linejoin="round"/>
 <path d="M905.5 891 V903 M900.5 896 L905.5 891 L910.5 896" fill="none" stroke="#e0e0e0" stroke-width="1.1"/>
 <path d="M1046 899.5 L1049.6 895.5 L1053.2 899.5 Z" fill="#e0e0e0"/>
 <path d="M1077.5 891 H1090 V893.5 H1077.5 Z M1078.5 893.5 V903.5 H1089 V893.5 M1081.5 896 V900.5 H1086 V896" fill="none" stroke="#e0e0e0" stroke-width="1.1"/>
 <path d="M1195 899.5 L1198.5 895.5 L1202 899.5 Z" fill="#e0e0e0"/>
 <path d="M1226.8 902.5 H1240 M1228 902.5 Q1229.6 901 1229.6 897 Q1229.6 891.5 1233.4 891.5 Q1237.2 891.5 1237.2 897 Q1237.2 901 1238.8 902.5 M1231.6 904.6 H1235.2" fill="none" stroke="#e0e0e0" stroke-width="1.1"/>
 <g fill="#8a8a8a"><rect x="1266" y="897" width="1" height="1"/><rect x="1266" y="899" width="1" height="1"/><rect x="1264" y="899" width="1" height="1"/><rect x="1266" y="901" width="1" height="1"/><rect x="1264" y="901" width="1" height="1"/><rect x="1262" y="901" width="1" height="1"/><rect x="1266" y="903" width="1" height="1"/><rect x="1264" y="903" width="1" height="1"/><rect x="1262" y="903" width="1" height="1"/><rect x="1260" y="903" width="1" height="1"/><rect x="1266" y="905" width="1" height="1"/><rect x="1264" y="905" width="1" height="1"/><rect x="1262" y="905" width="1" height="1"/><rect x="1260" y="905" width="1" height="1"/><rect x="1258" y="905" width="1" height="1"/></g>
</svg>
<div class="t" style="left:29.5px;top:890.5px;color:#e0e0e0;font-size:11.1px">Ready</div>
<div class="t" style="left:920px;top:890.8px;color:#e0e0e0">Add to Source Control</div>
<div class="t" style="left:1097px;top:890.8px;color:#e0e0e0;letter-spacing:-0.23px">Select Repository</div>

<!-- editor -->
<div class="a" style="left:7px;top:100px;width:946px;height:670px;background:#1f1f1f"></div>
<div class="a" style="left:7px;top:100px;width:2px;height:670px;background:#2b2b2b"></div><div class="a" style="left:9px;top:100px;width:20px;height:670px;background:#333333"></div>

<div class="code">
<div class="ln" style="top:102.30px">1</div>
<div class="ln" style="top:122.75px">2</div>
<div class="ln" style="top:143.20px">3</div>
<div class="ln" style="top:163.65px">4</div>
<div class="ln" style="top:184.10px">5</div>
<div class="ln" style="top:204.55px">6</div>
<div class="ln" style="top:225.00px">7</div>
<div class="ln" style="top:245.45px">8</div>
<div class="ln" style="top:265.90px;color:#d8d8d8">9</div>
<div class="t code" style="left:152px;top:101.4px"><span class="br">&lt;</span><span class="tag">!DOCTYPE</span> <span class="att">html</span><span class="br">&gt;</span></div>
<div class="t code" style="left:152px;top:121.85px"><span class="br">&lt;</span><span class="tag">html</span><span class="br">&gt;</span></div>
<div class="t code" style="left:152px;top:142.3px"><span class="br">&lt;</span><span class="tag">head</span><span class="br">&gt;</span></div>
<div class="t code" style="left:152px;top:162.75px"><span class="br">&lt;/</span><span class="tag">head</span><span class="br">&gt;</span></div>
<div class="t code" style="left:152px;top:183.2px"><span class="br">&lt;</span><span class="tag">body</span><span class="br">&gt;</span></div>
<div class="t code" style="left:152px;top:203.65px">    <span class="br">&lt;</span><span class="tag">app</span><span class="br">&gt;</span><span class="txt">Loading...</span><span class="br">&lt;/</span><span class="tag">app</span><span class="br">&gt;</span></div>
<div class="t code" style="left:152px;top:224.1px">    <span class="br">&lt;</span><span class="tag">script</span> <span class="att">src</span><span class="txt">=</span><span class="txt">"_framework/blazor.webview.js"</span><span class="br">&gt;&lt;/</span><span class="tag">script</span><span class="br">&gt;</span></div>
<div class="t code" style="left:152px;top:244.55px"><span class="br">&lt;/</span><span class="tag">body</span><span class="br">&gt;</span></div>
<div class="t code" style="left:152px;top:265.0px"><span class="br">&lt;/</span><span class="tag">html</span><span class="br">&gt;</span></div>
</div>

</div>
<div id="frame"></div>
</body></html>
